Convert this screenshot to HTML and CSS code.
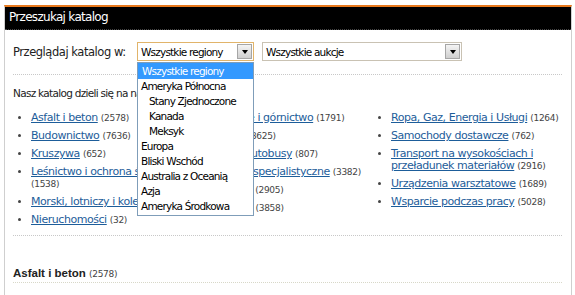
FILE: index.html
```html
<!DOCTYPE html>
<html lang="pl">
<head>
<meta charset="utf-8">
<link rel="stylesheet" href="styles.css">
</head>
<body>
<div class="panel">
  <div class="panel-head">Przeszukaj katalog</div>
  <div class="panel-body">
    <div class="browse-row">
      <span class="browse-label">Przeglądaj katalog w:</span>
      <div class="select select-region focused">
        <span class="select-text">Wszystkie regiony</span>
        <span class="select-btn"><span class="tri"></span></span>
        <ul class="dropdown">
          <li class="sel">Wszystkie regiony</li>
          <li>Ameryka Północna</li>
          <li class="sub">Stany Zjednoczone</li>
          <li class="sub">Kanada</li>
          <li class="sub">Meksyk</li>
          <li>Europa</li>
          <li>Bliski Wschód</li>
          <li>Australia z Oceanią</li>
          <li>Azja</li>
          <li>Ameryka Środkowa</li>
        </ul>
      </div>
      <div class="select select-auction">
        <span class="select-text">Wszystkie aukcje</span>
        <span class="select-btn"><span class="tri"></span></span>
      </div>
    </div>
    <div class="intro">Nasz katalog dzieli się na następujące kategorie:</div>
    <div class="cats">
      <ul class="col col1">
        <li><a href="#">Asfalt i beton</a> <span class="cnt">(2578)</span></li>
        <li><a href="#">Budownictwo</a> <span class="cnt">(7636)</span></li>
        <li><a href="#">Kruszywa</a> <span class="cnt">(652)</span></li>
        <li><a href="#">Leśnictwo i ochrona środowiska</a> <span class="cnt">(1538)</span></li>
        <li><a href="#">Morski, lotniczy i kolejowy</a> <span class="cnt">(415)</span></li>
        <li><a href="#">Nieruchomości</a> <span class="cnt">(32)</span></li>
      </ul>
      <ul class="col col2">
        <li><a href="#">Kopalnie i górnictwo</a> <span class="cnt">(1791)</span></li>
        <li><a href="#">Dźwigi</a> <span class="cnt">(3625)</span></li>
        <li><a href="#">Busy i autobusy</a> <span class="cnt">(807)</span></li>
        <li><a href="#">Pojazdy specjalistyczne</a> <span class="cnt">(3382)</span></li>
        <li><a href="#">Traktory</a> <span class="cnt">(2905)</span></li>
        <li><a href="#">Żurawie</a> <span class="cnt">(3858)</span></li>
      </ul>
      <ul class="col col3">
        <li><a href="#">Ropa, Gaz, Energia i Usługi</a> <span class="cnt">(1264)</span></li>
        <li><a href="#">Samochody dostawcze</a> <span class="cnt">(762)</span></li>
        <li><a href="#">Transport na wysokościach i przeładunek materiałów</a> <span class="cnt">(2916)</span></li>
        <li><a href="#">Urządzenia warsztatowe</a> <span class="cnt">(1689)</span></li>
        <li><a href="#">Wsparcie podczas pracy</a> <span class="cnt">(5028)</span></li>
      </ul>
    </div>
    <h2 class="section-title">Asfalt i beton <span class="cnt">(2578)</span></h2>
  </div>
</div>
</body>
</html>
```

FILE: styles.css
```css
html, body {
  margin: 0;
  padding: 0;
  background: #fff;
}
body {
  font-family: "DejaVu Sans", Verdana, sans-serif;
  color: #222;
  overflow: hidden;
}
.panel {
  margin: 5px 3px 0 4px;
  border-top: 2px solid #e8791d;
  border-left: 1px solid #cfcfcf;
  border-right: 1px solid #cfcfcf;
  height: 300px;
}
.panel-head {
  background: #000;
  color: #fff;
  font-size: 12px;
  letter-spacing: -0.7px;
  height: 22px;
  line-height: 21px;
  padding-left: 4px;
  border-bottom: 1px dotted #444;
}
.panel-body {
  padding: 12px 9px 0 8px;
}
.browse-row {
  display: flex;
  align-items: center;
  height: 19px;
  padding-bottom: 13px;
  border-bottom: 1px dotted #c8c8c8;
}
.browse-label {
  font-size: 11.5px;
  letter-spacing: -0.45px;
  color: #222;
  width: 124px;
  white-space: nowrap;
}
.select {
  position: relative;
  height: 17px;
  border: 1px solid #c9c2b3;
  background: #fff;
  display: flex;
  align-items: center;
  font-size: 10.5px;
  letter-spacing: -0.8px;
  color: #000;
}
.select.focused {
  border-color: #e1b46a;
}
.select-region {
  width: 115px;
  margin-right: 8px;
}
.select-auction {
  width: 198px;
}
.select-text {
  flex: 1;
  padding-left: 3px;
  white-space: nowrap;
  overflow: hidden;
}
.select-btn {
  width: 13px;
  height: 13px;
  margin-right: 1px;
  border: 1px solid #a6a6a6;
  background: linear-gradient(#f4f4f4, #cfcfcf);
  display: flex;
  align-items: center;
  justify-content: center;
}
.tri {
  width: 0;
  height: 0;
  border-left: 3px solid transparent;
  border-right: 3px solid transparent;
  border-top: 4px solid #000;
}
.dropdown {
  position: absolute;
  left: -1px;
  top: 19px;
  width: 115px;
  margin: 0;
  padding: 0 0 1px 0;
  list-style: none;
  background: #fff;
  border: 1px solid #7f9db9;
  z-index: 10;
  font-size: 10.5px;
  letter-spacing: -0.8px;
}
.dropdown li {
  height: 15px;
  line-height: 15px;
  padding-left: 3px;
  white-space: nowrap;
  color: #000;
}
.dropdown li.sel {
  background: #3399ff;
  color: #fff;
  height: 16px;
  line-height: 16px;
  padding-left: 4px;
}
.dropdown li.sub {
  padding-left: 11px;
}
.intro {
  font-size: 10.5px;
  letter-spacing: -0.7px;
  color: #222;
  margin-top: 12px;
  white-space: nowrap;
}
.cats {
  display: flex;
  margin-top: 13px;
  padding-bottom: 3px;
  border-bottom: 1px dotted #c8c8c8;
}
.col {
  margin: 0;
  padding: 0 0 0 18px;
  list-style: disc;
  color: #444;
  box-sizing: border-box;
}
.col1, .col2 {
  width: 180px;
  flex: none;
}
.col3 {
  flex: 1;
}
.col li {
  font-size: 11px;
  letter-spacing: -0.45px;
  line-height: 12px;
  margin-bottom: 6px;
}
.col li::marker {
  font-size: 10px;
}
.col a {
  color: #1d5d9a;
  text-decoration: underline;
}
.cnt {
  font-size: 9px;
  letter-spacing: -0.3px;
  color: #444;
  white-space: nowrap;
}
.section-title {
  font-family: "Liberation Sans", Arial, sans-serif;
  font-size: 11.5px;
  font-weight: bold;
  color: #222;
  margin: 31px 0 0 0;
  padding-bottom: 3px;
  border-bottom: 1px dotted #d8d8c8;
}
.section-title .cnt {
  font-family: "DejaVu Sans", Verdana, sans-serif;
  font-weight: normal;
}
```
